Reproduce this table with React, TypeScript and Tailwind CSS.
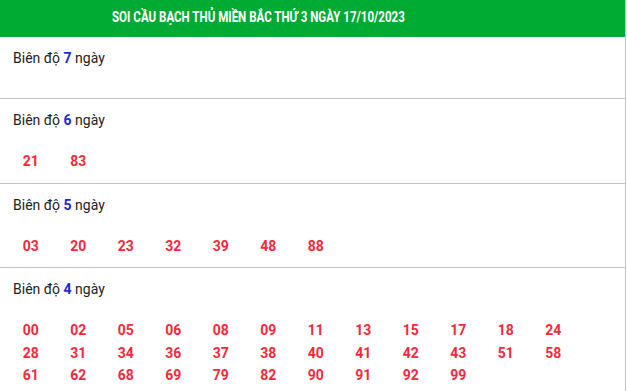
const sections: { days: number; numbers: string[] }[] = [
  { days: 7, numbers: [] },
  { days: 6, numbers: ["21", "83"] },
  { days: 5, numbers: ["03", "20", "23", "32", "39", "48", "88"] },
  {
    days: 4,
    numbers: [
      "00", "02", "05", "06", "08", "09", "11", "13", "15", "17", "18", "24",
      "28", "31", "34", "36", "37", "38", "40", "41", "42", "43", "51", "58",
      "61", "62", "68", "69", "79", "82", "90", "91", "92", "99",
    ],
  },
];

export default function App() {
  return (
    <div className="w-[627px] h-[391px] overflow-hidden bg-white font-['Roboto',sans-serif]">
      <div className="w-[626px] border-r border-[#c4c4c4]">
        {/* Title bar */}
        <div className="h-[37px] bg-[#00ab33] flex items-center pl-[112px] pb-[2px]">
          <h2 className="text-white font-bold text-[15px] leading-none whitespace-nowrap scale-x-[0.77] origin-left">
            SOI CẦU BẠCH THỦ MIỀN BẮC THỨ 3 NGÀY 17/10/2023
          </h2>
        </div>

        {sections.map((s) => (
          <div key={s.days} className="border-b border-[#c4c4c4]">
            <div className="pl-[13px] pt-[11px] text-[14px] leading-[20px] text-[#222]">
              Biên độ <span className="font-bold text-[#1a2bd4]">{s.days}</span> ngày
            </div>
            <div className="mt-[20px] pb-[10px] pl-[7px] grid grid-cols-[repeat(12,47.5px)]">
              {s.numbers.map((n) => (
                <span
                  key={n}
                  className="text-center text-[14px] font-bold leading-[22.5px] text-[#f8283a]"
                >
                  {n}
                </span>
              ))}
            </div>
          </div>
        ))}
      </div>
    </div>
  );
}
